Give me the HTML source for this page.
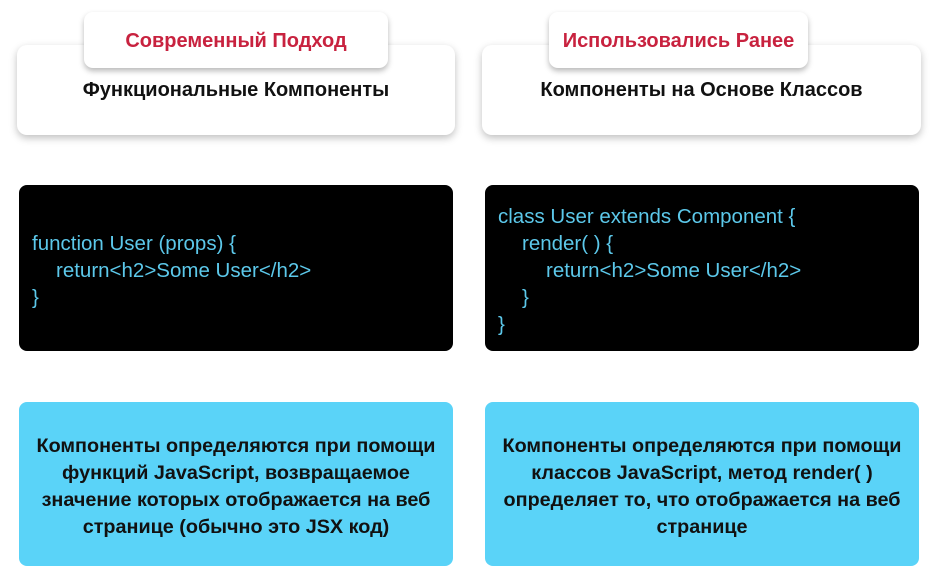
<!DOCTYPE html>
<html><head><meta charset="utf-8"><style>
body{margin:0;width:937px;height:575px;background:#fff;position:relative;overflow:hidden;font-family:"Liberation Sans",sans-serif}
.card{position:absolute;background:#fff;border-radius:10px;box-shadow:0 3px 8px rgba(0,0,0,.25);}
.tab{position:absolute;background:#fff;border-radius:9px;box-shadow:0 3px 6px rgba(0,0,0,.28);color:#c8223f;font-weight:bold;font-size:20px;text-align:center;line-height:59px}
.title{position:absolute;font-weight:bold;font-size:20px;text-align:center;color:#111}
.code{position:absolute;background:#000;border-radius:8px;color:#5cc8ea;font-size:20.5px;line-height:27px;box-sizing:border-box}
.blue{position:absolute;background:#5ad3f8;border-radius:8px;font-weight:bold;font-size:19.8px;line-height:27px;text-align:center;color:#111;display:flex;align-items:center;justify-content:center;padding-top:6px;box-sizing:border-box;white-space:nowrap}
</style></head><body>
<div class="card" style="left:17px;top:45px;width:438px;height:90px"></div>
<div class="title" style="left:17px;top:79px;width:438px">Функциональные Компоненты</div>
<div class="tab" style="left:84px;top:12px;width:304px;height:56px">Современный Подход</div>

<div class="card" style="left:482px;top:45px;width:439px;height:90px"></div>
<div class="title" style="left:482px;top:79px;width:439px">Компоненты на Основе Классов</div>
<div class="tab" style="left:549px;top:12px;width:259px;height:56px">Использовались Ранее</div>

<div class="code" style="left:19px;top:185px;width:434px;height:166px;padding:45px 0 0 13px">function User (props) {<br><span style="padding-left:24px">return&lt;h2&gt;Some User&lt;/h2&gt;</span><br>}</div>
<div class="code" style="left:485px;top:185px;width:434px;height:166px;padding:18px 0 0 13px">class User extends Component {<br><span style="padding-left:24px">render( ) {</span><br><span style="padding-left:48px">return&lt;h2&gt;Some User&lt;/h2&gt;</span><br><span style="padding-left:24px">}</span><br>}</div>

<div class="blue" style="left:19px;top:402px;width:434px;height:164px"><div>Компоненты определяются при помощи<br>функций JavaScript, возвращаемое<br>значение которых отображается на веб<br>странице (обычно это JSX код)</div></div>
<div class="blue" style="left:485px;top:402px;width:434px;height:164px"><div>Компоненты определяются при помощи<br>классов JavaScript, метод render( )<br>определяет то, что отображается на веб<br>странице</div></div>
</body></html>
